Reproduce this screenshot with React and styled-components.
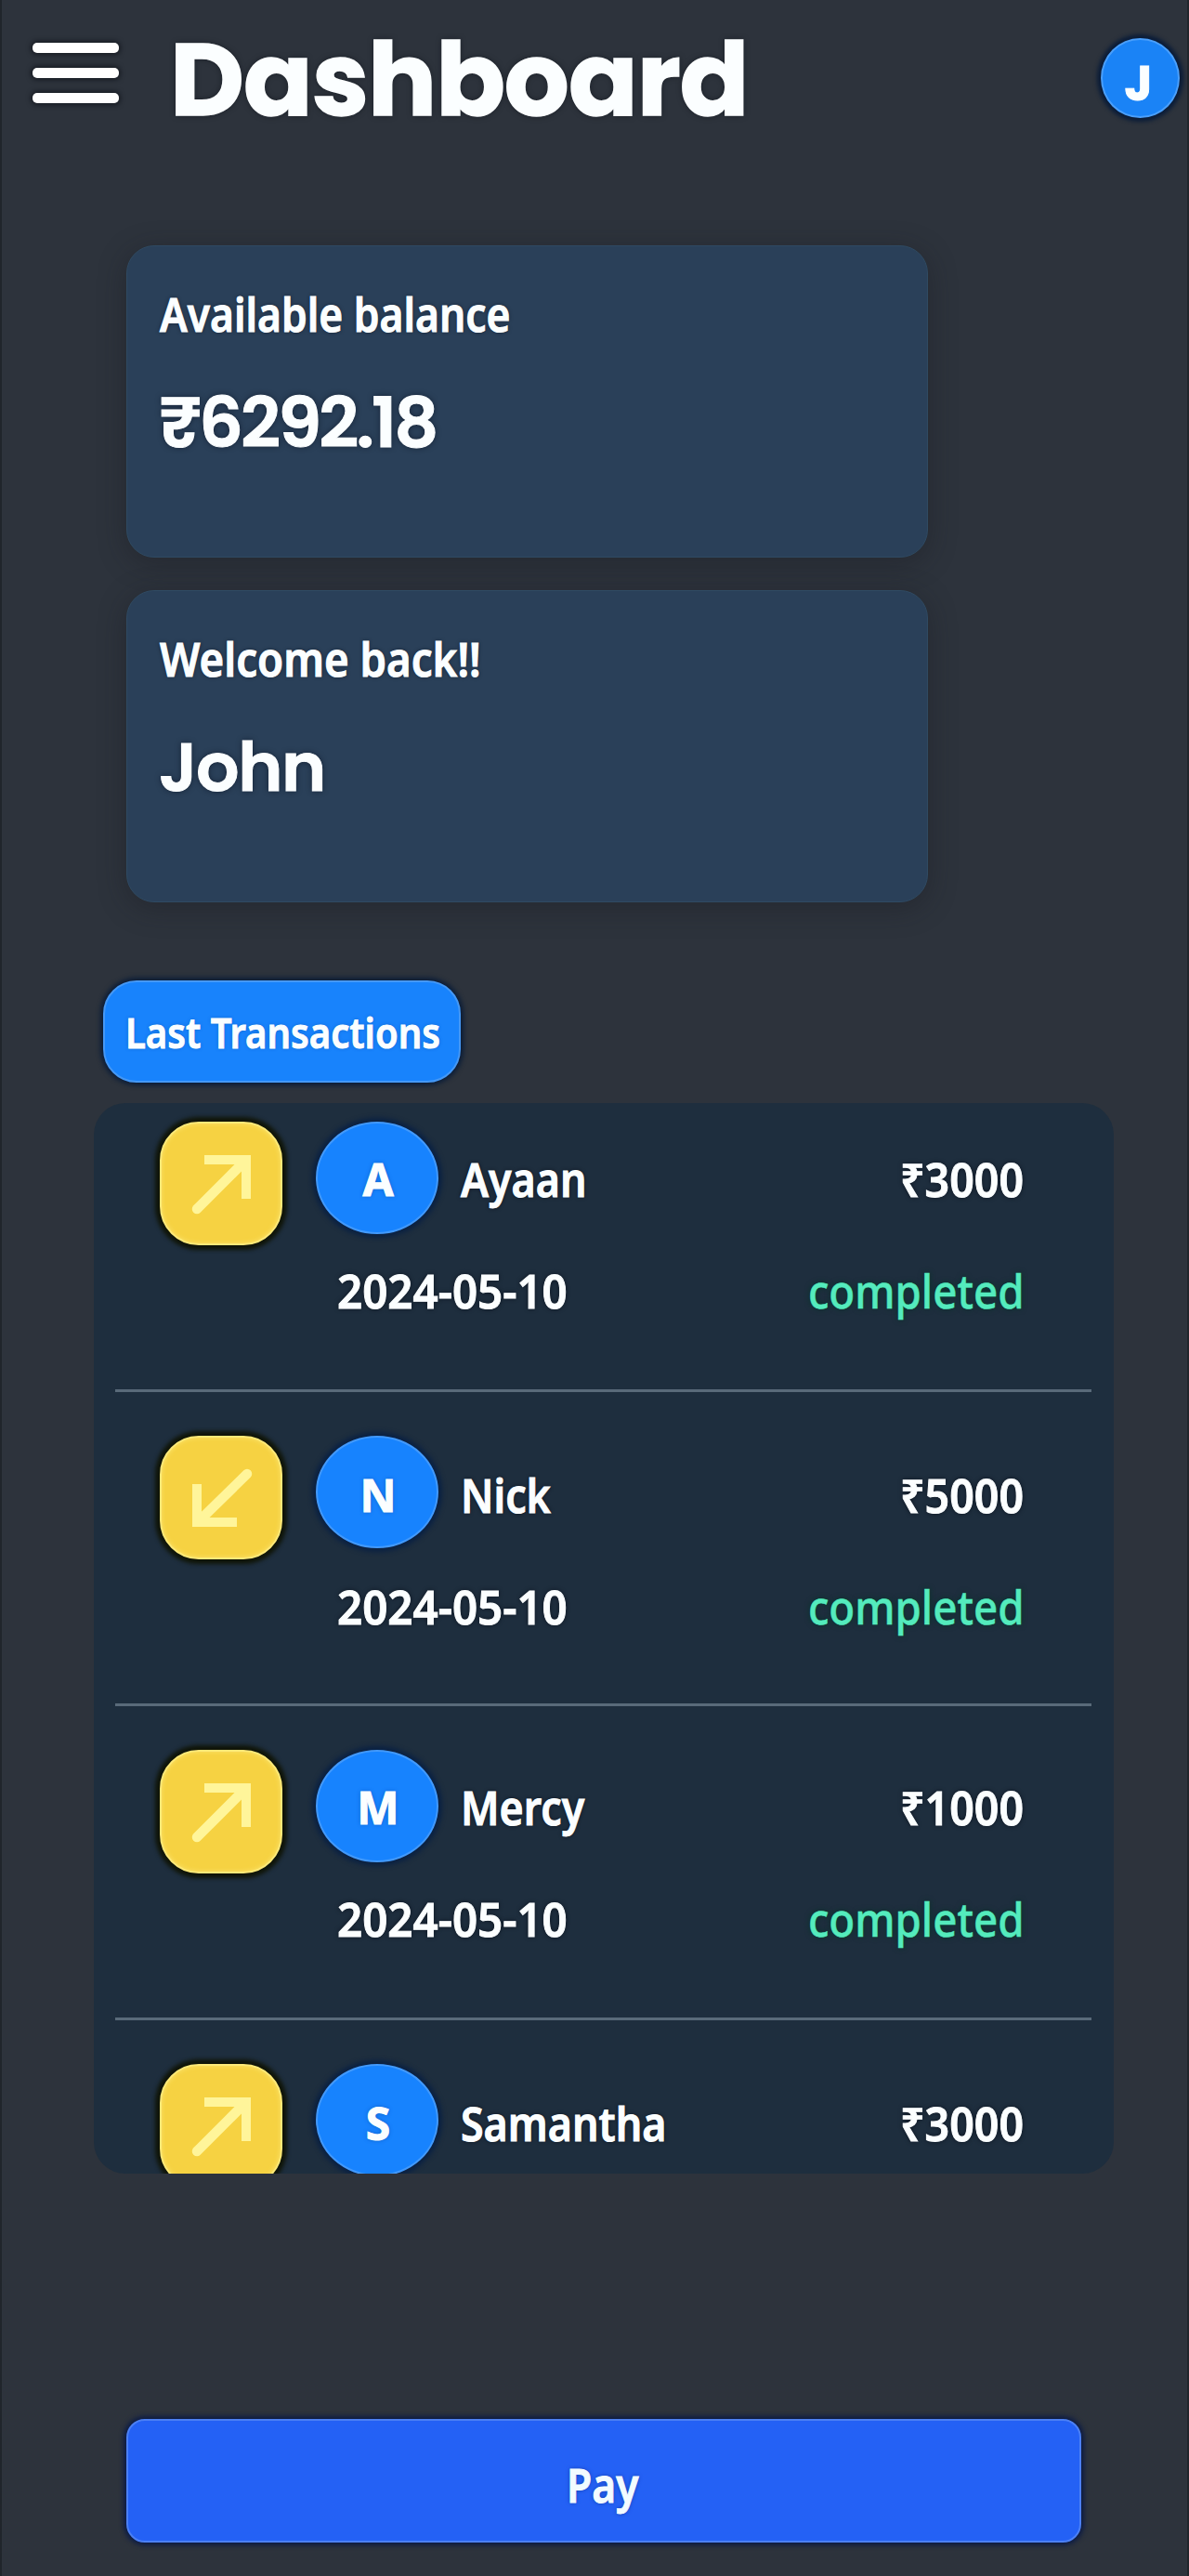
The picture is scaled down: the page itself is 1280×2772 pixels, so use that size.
import React from "react";
import styled, { createGlobalStyle } from "styled-components";

const GlobalStyle = createGlobalStyle`
  *, *::before, *::after { box-sizing: border-box; }
  body {
    margin: 0;
    background: #2d333c;
  }
`;

const bodyFont = `"Noto Sans", "Open Sans", sans-serif`;
const displayFont = `Poppins, Inter, sans-serif`;

const Page = styled.main`
  width: 1280px;
  height: 2772px;
  display: flex;
  flex-direction: column;
  overflow: hidden;
  background: #2d333c;
  border-left: 2px solid #20252b;
  border-right: 2px solid #20252b;
  color: #fbfeff;
  font-family: ${bodyFont};
  -webkit-text-stroke: 1px currentColor;
`;

const Header = styled.header`
  height: 264px;
  flex: none;
  display: flex;
  align-items: flex-start;
  padding: 36px 8px 0 33px;
`;

const MenuButton = styled.button`
  width: 93px;
  padding: 0;
  margin-top: 10px;
  border: 0;
  background: none;
  display: flex;
  flex-direction: column;
  gap: 16px;
`;

const MenuBar = styled.span`
  height: 11px;
  border-radius: 5px;
  background: #fff;
  box-shadow: 0 0 5px 2px rgba(8, 12, 18, 0.6);
`;

const Title = styled.h1`
  margin: 0 auto 0 55px;
  font: 700 110px/100px ${displayFont};
  letter-spacing: -1px;
  -webkit-text-stroke: 1.5px currentColor;
  text-shadow: 0 0 6px rgba(8, 12, 18, 0.6);
`;

const ProfileBadge = styled.div`
  width: 85px;
  height: 86px;
  margin-top: 5px;
  padding: 17px 4px 0 0;
  border-radius: 50%;
  background: #1a83f6;
  border: 2px solid #4a9ffb;
  box-shadow: 0 0 4px 4px #0a1c38;
  font: 700 52px/60px ${displayFont};
  text-align: center;
`;

const Cards = styled.section`
  display: flex;
  flex-direction: column;
  gap: 35px;
  padding-left: 134px;
`;

const Card = styled.article`
  width: 863px;
  height: 336px;
  padding: 43px 0 0 35px;
  border-radius: 30px;
  background: #2a4059;
  border: 1px solid #2f4a62;
  box-shadow: 0 6px 30px rgba(26, 26, 32, 0.4);
`;

const CardLabel = styled.h2`
  margin: 0;
  width: max-content;
  font: 600 50px/60px ${bodyFont};
  transform: scaleX(${(p) => p.$stretch});
  transform-origin: left;
  text-shadow: 0 0 5px rgba(8, 16, 32, 0.7);
`;

const CardValue = styled.p`
  margin: 47px 0 0 -1px;
  font: 600 ${(p) => p.$size}px/80px ${displayFont};
  letter-spacing: ${(p) => p.$tracking}px;
  text-shadow: 0 0 6px rgba(8, 16, 32, 0.7);
`;

const SectionTag = styled.h2`
  width: 385px;
  height: 110px;
  margin: 84px 0 22px 109px;
  flex: none;
  display: flex;
  align-items: center;
  padding: 1px 0 0 22px;
  border-radius: 36px;
  background: #1883fc;
  border: 2px solid #4598f5;
  box-shadow: 0 0 5px 3px #0b1d38;
  font: 600 45px/60px ${bodyFont};
`;

const TagText = styled.span`
  white-space: nowrap;
  transform: scaleX(0.89);
  transform-origin: left;
  text-shadow: 0 0 4px rgba(0, 60, 140, 0.5);
`;

const List = styled.ul`
  width: 1098px;
  height: 1152px;
  flex: none;
  margin: 0 0 0 99px;
  padding: 0 24px 0 23px;
  list-style: none;
  border-radius: 34px;
  overflow: hidden;
  background: #1e2e3e;
`;

const Row = styled.li`
  height: 338px;
  display: flex;
  gap: 36px;
  padding: 47px 73px 0 48px;
  border-bottom: 3px solid #596a79;

  &:first-child {
    height: 311px;
    padding-top: 20px;
  }
`;

const DirectionTile = styled.div`
  width: 132px;
  height: 133px;
  flex: none;
  border-radius: 42px;
  background: #f6d242;
  border: 2px solid #fde978;
  box-shadow: 0 0 4px 5px #101508, inset 0 0 5px #fbe36c;

  svg {
    display: block;
    margin: -2px;
  }
`;

const Details = styled.div`
  flex: 1;
  min-width: 0;
`;

const TopLine = styled.div`
  height: 121px;
  display: flex;
`;

const Avatar = styled.div`
  width: 132px;
  height: 121px;
  flex: none;
  padding: ${(p) => 30 + p.$drop}px 0 0 2px;
  border-radius: 50%;
  background: #1783fe;
  border: 2px solid #4299fb;
  box-shadow: 0 0 5px 4px #0a2143;
  font: 700 48px/60px ${bodyFont};
  text-align: center;
  text-shadow: 0 0 4px rgba(0, 50, 130, 0.5);
`;

const Name = styled.span`
  margin: ${(p) => 32 + p.$drop}px auto 0 24px;
  font: 600 50px/60px ${bodyFont};
  transform: scaleX(0.895);
  transform-origin: left;
  text-shadow: 0 0 5px rgba(4, 8, 18, 0.8);
`;

const Amount = styled.span`
  margin-top: ${(p) => 32 + p.$drop}px;
  font: 600 50px/60px ${bodyFont};
  transform: scaleX(0.93);
  transform-origin: right;
  text-shadow: 0 0 5px rgba(4, 8, 18, 0.8);
`;

const BottomLine = styled.div`
  display: flex;
  justify-content: space-between;
  padding: ${(p) => 31 + p.$drop}px 0 0 23px;
`;

const DateText = styled.time`
  font: 600 50px/60px ${bodyFont};
  transform: scaleX(0.95);
  transform-origin: left;
  text-shadow: 0 0 5px rgba(4, 8, 18, 0.8);
`;

const Status = styled.span`
  font: 500 50px/60px ${bodyFont};
  color: #54ebbd;
  -webkit-text-stroke-width: 0.5px;
  transform: scaleX(0.914);
  transform-origin: right;
  text-shadow: 0 0 7px #003528;
`;

const PayButton = styled.button`
  width: 1028px;
  height: 133px;
  flex: none;
  margin: 264px 0 0 134px;
  padding: 8px 3px 0 0;
  border-radius: 20px;
  border: 2px solid #4c80f4;
  background: #2461f5;
  box-shadow: 0 0 5px 3px #0c1b45;
  color: #f2fbff;
  font: 600 50px/60px ${bodyFont};
  -webkit-text-stroke: 1px currentColor;
`;

const PayText = styled.span`
  display: inline-block;
  transform: scaleX(0.885);
  text-shadow: 0 0 5px rgba(0, 30, 110, 0.6);
`;

const arrows = {
  out: ["M40 94 L90 44", "M48 41 H93 V83"],
  in: ["M94 41 L44 90", "M40 52 V93 H83"],
};

function Arrow({ direction }) {
  const [shaft, head] = arrows[direction];
  return (
    <svg width="132" height="133" viewBox="0 0 132 133" fill="none" stroke="#fff59a">
      <path d={shaft} strokeWidth="10.5" strokeLinecap="round" />
      <path d={head} strokeWidth="10" strokeLinejoin="miter" />
    </svg>
  );
}

const transactions = [
  { name: "Ayaan", amount: "₹3000", direction: "out", drop: 0, date: "2024-05-10", status: "completed" },
  { name: "Nick", amount: "₹5000", direction: "in", drop: 2, date: "2024-05-10", status: "completed" },
  { name: "Mercy", amount: "₹1000", direction: "out", drop: 0, date: "2024-05-10", status: "completed" },
  { name: "Samantha", amount: "₹3000", direction: "out", drop: 2 },
];

export default function App() {
  return (
    <>
      <GlobalStyle />
      <Page>
        <Header>
          <MenuButton aria-label="Menu">
            <MenuBar />
            <MenuBar />
            <MenuBar />
          </MenuButton>
          <Title>Dashboard</Title>
          <ProfileBadge>J</ProfileBadge>
        </Header>
        <Cards>
          <Card>
            <CardLabel $stretch={0.887}>Available balance</CardLabel>
            <CardValue $size={75} $tracking={-2.9}>₹6292.18</CardValue>
          </Card>
          <Card>
            <CardLabel $stretch={0.912}>Welcome back!!</CardLabel>
            <CardValue $size={73} $tracking={-1.5}>John</CardValue>
          </Card>
        </Cards>
        <SectionTag>
          <TagText>Last Transactions</TagText>
        </SectionTag>
        <List>
          {transactions.map((t) => (
            <Row key={t.name}>
              <DirectionTile>
                <Arrow direction={t.direction} />
              </DirectionTile>
              <Details>
                <TopLine>
                  <Avatar $drop={t.drop}>{t.name[0]}</Avatar>
                  <Name $drop={t.drop}>{t.name}</Name>
                  <Amount $drop={t.drop}>{t.amount}</Amount>
                </TopLine>
                {t.date && (
                  <BottomLine $drop={t.drop}>
                    <DateText>{t.date}</DateText>
                    <Status>{t.status}</Status>
                  </BottomLine>
                )}
              </Details>
            </Row>
          ))}
        </List>
        <PayButton>
          <PayText>Pay</PayText>
        </PayButton>
      </Page>
    </>
  );
}
